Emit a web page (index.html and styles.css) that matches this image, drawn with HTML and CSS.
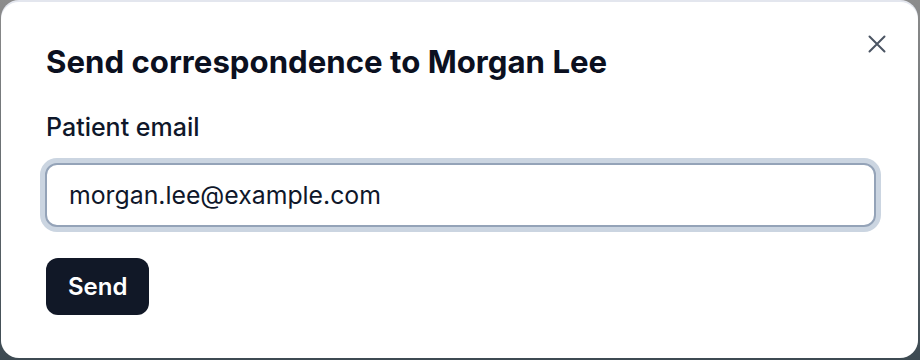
FILE: index.html
```html
<!DOCTYPE html>
<html lang="en">
  <head>
    <meta charset="UTF-8" />
    <meta name="viewport" content="width=device-width, initial-scale=1.0" />
    <title>Send correspondence</title>
    <link rel="stylesheet" href="styles.css">
  </head>
  <body>
    <div class="dialog" role="dialog" aria-labelledby="dialog-title">
      <button class="close-btn" type="button" aria-label="Close">
        <svg width="18" height="18" viewBox="0 0 18 18" fill="none" stroke="currentColor" stroke-width="2" stroke-linecap="round">
          <path d="M1.5 1.5 L16.5 16.5 M16.5 1.5 L1.5 16.5" />
        </svg>
      </button>

      <h2 class="dialog-title" id="dialog-title">Send correspondence to Morgan Lee</h2>

      <form class="send-form">
        <label class="field-label" for="email">Patient email</label>
        <input class="text-input" id="email" type="email" value="morgan.lee@example.com" />
        <button class="send-btn" type="submit">Send</button>
      </form>
    </div>
  </body>
</html>
```

FILE: styles.css
```css
* {
  margin: 0;
  padding: 0;
  box-sizing: border-box;
}

body {
  font-family: "Inter", "Noto Sans", sans-serif;
  background: linear-gradient(180deg, #8c8c8c 0%, #3d4a52 100%);
  height: 100vh;
  overflow: hidden;
  padding: 2px 2px 2px 1px;
}

.dialog {
  position: relative;
  height: 100%;
  background: #ffffff;
  border-radius: 18px;
  box-shadow: 0 -2px 0 0 #e3e6ee;
  padding: 40px 42px 0 44px;
  color: #0f172a;
}

.dialog-title {
  font-size: 31.2px;
  font-weight: 700;
  line-height: 40px;
  margin-bottom: 30px;
  padding-left: 1px;
  color: #0b1020;
}

.close-btn {
  position: absolute;
  top: 33px;
  right: 32px;
  background: none;
  border: none;
  color: #4b5563;
  width: 18px;
  height: 18px;
  cursor: pointer;
}

.send-form {
  display: flex;
  flex-direction: column;
  align-items: flex-start;
}

.field-label {
  font-size: 25px;
  font-weight: 500;
  line-height: 30px;
  margin-bottom: 21px;
  padding-left: 1px;
}

.text-input {
  width: 100%;
  height: 64px;
  font-family: inherit;
  font-size: 24.8px;
  color: #0f172a;
  padding: 0 22px;
  border: 2px solid #94a3b8;
  border-radius: 12px;
  box-shadow: 0 0 0 5px #cbd5e1;
  outline: none;
  margin-bottom: 31px;
}

.send-btn {
  margin-left: 1px;
  background: #111827;
  color: #ffffff;
  font-family: inherit;
  font-size: 24px;
  font-weight: 600;
  border: none;
  border-radius: 12px;
  height: 57px;
  padding: 0 22px;
  cursor: pointer;
}
```
